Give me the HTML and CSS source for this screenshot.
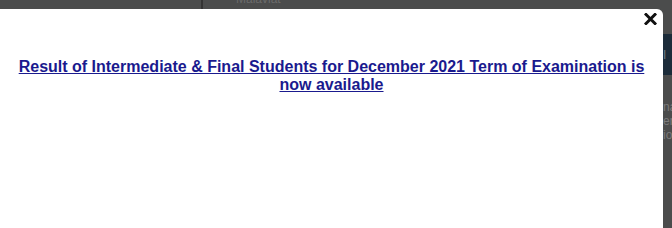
FILE: index.html
```html
<!DOCTYPE html>
<html lang="en">
<head>
  <meta charset="UTF-8" />
  <title>Notice</title>
  <link rel="stylesheet" href="styles.css">
</head>
<body>
  <div class="page">
    <div class="sidebar-rule"></div>
    <div class="top-text">Malaviat</div>
    <div class="side-band">I</div>
    <div class="side-text">na<br>en<br>io</div>
  </div>
  <div class="overlay"></div>
  <div class="modal">
    <a class="close" href="#" aria-label="Close">
      <svg width="13" height="12" viewBox="0 0 13 12">
        <path d="M2 1.5 L11 10.5 M11 1.5 L2 10.5" stroke="#111" stroke-width="3" stroke-linecap="square" />
      </svg>
    </a>
    <p class="notice">
      <a href="#">Result of Intermediate &amp; Final Students for December 2021 Term of Examination is now available</a>
    </p>
  </div>
</body>
</html>
```

FILE: styles.css
```css
html, body {
  margin: 0;
  height: 100%;
  overflow: hidden;
}
body {
  font-family: "Liberation Sans", Arial, sans-serif;
  background: #4b4c4c;
}
.page {
  position: relative;
  height: 100%;
}
.sidebar-rule {
  position: absolute;
  left: 201px;
  top: 0;
  width: 2px;
  height: 12px;
  background: #333;
}
.top-text {
  position: absolute;
  left: 236px;
  top: -8px;
  font-size: 12px;
  color: #6a6a6a;
}
.side-band {
  position: absolute;
  left: 663px;
  top: 34px;
  width: 12px;
  height: 41px;
  background: #1c2c3a;
  color: #6b7b88;
  font-size: 12px;
  padding-top: 14px;
  box-sizing: border-box;
}
.side-text {
  position: absolute;
  left: 663px;
  top: 100px;
  font-size: 12px;
  line-height: 14px;
  color: #7a7a7a;
}
.modal {
  position: absolute;
  left: 0;
  top: 9px;
  width: 663px;
  height: 240px;
  background: #fff;
  border-radius: 0 6px 0 0;
  box-sizing: border-box;
  padding: 49px 14px 0;
}
.close {
  position: absolute;
  right: 6px;
  top: 4px;
  display: block;
  line-height: 0;
}
.notice {
  margin: 0;
  text-align: center;
  font-size: 16px;
  font-weight: bold;
  line-height: 18px;
}
.notice a {
  color: #1a1a8e;
}
```
